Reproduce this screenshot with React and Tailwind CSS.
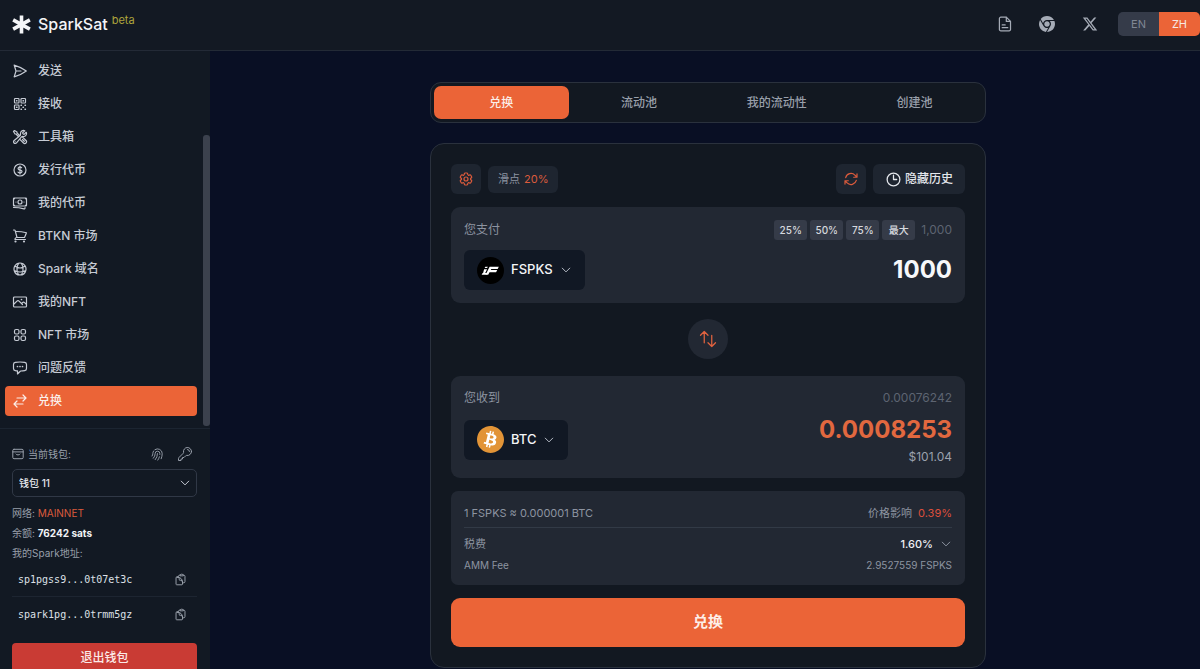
import { useState } from 'react';
import { FaChrome, FaXTwitter } from 'react-icons/fa6';
import { SiBitcoin } from 'react-icons/si';
import {
  HiOutlineArrowPath,
  HiOutlineArrowsRightLeft,
  HiOutlineArrowsUpDown,
  HiOutlineBanknotes,
  HiOutlineChatBubbleLeftEllipsis,
  HiOutlineChevronDown,
  HiOutlineClipboardDocument,
  HiOutlineClock,
  HiOutlineCog6Tooth,
  HiOutlineCurrencyDollar,
  HiOutlineFingerPrint,
  HiOutlineGlobeAlt,
  HiOutlineKey,
  HiOutlinePaperAirplane,
  HiOutlinePhoto,
  HiOutlineQrCode,
  HiOutlineShoppingCart,
  HiOutlineSquares2X2,
  HiOutlineWrenchScrewdriver,
} from 'react-icons/hi2';

const NAV = [
  { id: 'send', label: '发送', icon: HiOutlinePaperAirplane },
  { id: 'receive', label: '接收', icon: HiOutlineQrCode },
  { id: 'tools', label: '工具箱', icon: HiOutlineWrenchScrewdriver },
  { id: 'issue', label: '发行代币', icon: HiOutlineCurrencyDollar },
  { id: 'tokens', label: '我的代币', icon: HiOutlineBanknotes },
  { id: 'btkn', label: 'BTKN 市场', icon: HiOutlineShoppingCart },
  { id: 'names', label: 'Spark 域名', icon: HiOutlineGlobeAlt },
  { id: 'nfts', label: '我的NFT', icon: HiOutlinePhoto },
  { id: 'nftmarket', label: 'NFT 市场', icon: HiOutlineSquares2X2 },
  { id: 'feedback', label: '问题反馈', icon: HiOutlineChatBubbleLeftEllipsis },
  { id: 'swap', label: '兑换', icon: HiOutlineArrowsRightLeft },
];

const TABS = ['兑换', '流动池', '我的流动性', '创建池'];
const PERCENTS = ['25%', '50%', '75%', '最大'];
const ADDRESSES = ['sp1pgss9...0t07et3c', 'spark1pg...0trmm5gz'];

function Logo() {
  return (
    <svg viewBox="0 0 20 20" className="w-[19px] h-[19px]" stroke="#f4f5f7" strokeWidth="3.8" aria-hidden="true">
      <path d="M10 0.5v19M1.2 5.2l17.6 9.6M18.8 5.2L1.2 14.8" />
    </svg>
  );
}

function DocIcon() {
  return (
    <svg viewBox="0 0 16 18" className="w-[14px] h-4" fill="none" stroke="currentColor" strokeWidth="1.4" strokeLinejoin="round" strokeLinecap="round" aria-hidden="true">
      <path d="M3.200 1.200h6.300l4.800 4.800v9.200a1.600 1.600 0 0 1-1.600 1.600H3.200a1.600 1.600 0 0 1-1.600-1.600V2.800a1.600 1.600 0 0 1 1.600-1.600z" />
      <path d="M9.500 1.400V6h4.600M4.800 10h3.400M4.800 13.200h6.400" />
    </svg>
  );
}

function WalletIcon() {
  return (
    <svg viewBox="0 0 12 12" className="w-3 h-3" fill="none" stroke="currentColor" strokeLinecap="round" strokeLinejoin="round" aria-hidden="true">
      <rect x="0.8" y="1.3" width="10.4" height="9.4" rx="1.2" />
      <path d="M0.8 3.900h10.400M3.900 6.100c.6 1.200 3.600 1.200 4.200 0" />
    </svg>
  );
}

function FspksLogo() {
  return (
    <svg viewBox="0 0 27 27" className="w-[27px] h-[27px]" aria-hidden="true">
      <circle cx="13.5" cy="13.5" r="13.5" fill="#000" />
      <g fill="#fff">
        <path d="M8.300 9.800h2.500l-.7 1.300H7.600z" />
        <path d="M7.100 12.200h3l-1.900 3.700h2.200l-1 1.900H4.600l1-1.800h.5z" />
        <path d="M12.600 9.800h9.200l-1.100 2.200h-6.400l-.5 1.100h6.400l-1.100 2.100h-6.600l-1.300 2.600H8.600z" />
      </g>
    </svg>
  );
}

function BtcLogo() {
  return (
    <span className="flex rounded-full bg-[radial-gradient(closest-side,#fff_85%,transparent_86%)] text-[#e29437]">
      <SiBitcoin className="h-[27px] w-[27px]" />
    </span>
  );
}

function Header() {
  return (
    <header className="flex h-[51px] shrink-0 items-center justify-between border-b border-[#232a36] bg-[#131923] pb-[2px] pl-3">
      <a href="#" className="flex items-center">
        <Logo />
        <span className="ml-[7px] text-base font-medium text-[#f4f5f7]">SparkSat</span>
        <span className="mb-2 ml-1 text-[11px] text-[#aea43c]">beta</span>
      </a>
      <div className="flex items-center text-[#a5abb6]">
        <a href="#docs" aria-label="Docs" className="mr-[27px]"><DocIcon /></a>
        <a href="#chrome" aria-label="Chrome" className="mr-[27px]"><FaChrome className="h-4 w-4" /></a>
        <a href="#x" aria-label="X" className="mr-5"><FaXTwitter className="h-4 w-4" /></a>
        <div className="flex h-6 overflow-hidden rounded-[5px] text-[11px]">
          <button className="w-[41px] bg-[#353b49] text-[#808794]">EN</button>
          <button className="w-[41px] bg-[#eb6437] text-[#f6e9e4]">ZH</button>
        </div>
      </div>
    </header>
  );
}

function Sidebar() {
  const [active, setActive] = useState('swap');
  return (
    <aside className="flex w-[210px] shrink-0 flex-col bg-[#121923]">
      <div className="flex justify-between border-b border-[#1c2531]">
        <nav className="flex w-[197px] flex-col gap-[3px] pt-[5px] pb-3 pl-[5px]">
          {NAV.map(({ id, label, icon: Icon }) => (
            <button
              key={id}
              onClick={() => setActive(id)}
              className={`flex h-[30px] items-center gap-[10px] rounded-[4px] pl-[7px] text-[12px] font-medium ${active === id ? 'bg-[#eb6437] text-[#fbeee9]' : 'text-[#c6cbd4]'}`}
            >
              <Icon className="h-4 w-4 stroke-[1.8]" />
              {label}
            </button>
          ))}
        </nav>
        {/* scroll thumb */}
        <div className="mt-[84px] mb-[2px] w-[7px] rounded-[3px] bg-[#3b414d]" />
      </div>

      <div className="flex flex-col pt-4 pr-[13px] pl-3 text-[10px] text-[#989faa]">
        <div className="flex h-[18px] items-center justify-between pr-1">
          <label htmlFor="wallet" className="flex items-center gap-1"><WalletIcon />当前钱包:</label>
          <div className="flex gap-3">
            <button aria-label="Fingerprint"><HiOutlineFingerPrint className="h-[15px] w-[15px]" /></button>
            <button aria-label="Keys"><HiOutlineKey className="h-4 w-4" /></button>
          </div>
        </div>
        <div className="relative mt-[6px]">
          <select id="wallet" className="h-7 w-full appearance-none rounded-[5px] border border-[#303846] bg-transparent px-[6px] text-[10px] font-medium text-[#e4e7ec]">
            <option>钱包 11</option>
          </select>
          <HiOutlineChevronDown className="pointer-events-none absolute top-2 right-[6px] h-3 w-3 stroke-2 text-[#c6cbd4]" />
        </div>
        <div className="mt-[6px] leading-5">
          <p>网络: <span className="text-[#dc5b3c]">MAINNET</span></p>
          <p>余额: <b className="text-[#f0f2f5]">76242 sats</b></p>
          <p>我的Spark地址:</p>
        </div>
        <ul className="divide-y divide-[#1d2531]">
          {ADDRESSES.map(a => (
            <li key={a} className="flex h-[34px] items-center justify-between pr-[10px] pl-[6px]">
              <span className="font-['DejaVu_Sans_Mono',monospace] text-[#dde0e6]">{a}</span>
              <button aria-label="Copy"><HiOutlineClipboardDocument className="h-[13px] w-[13px] stroke-[1.8]" /></button>
            </li>
          ))}
        </ul>
        <button className="mt-3 h-[30px] rounded-[4px] bg-[#c93b34] text-[12px] font-medium text-[#fbe9e7]">退出钱包</button>
      </div>
    </aside>
  );
}

function TokenButton({ icon, symbol }) {
  return (
    <button className="flex h-10 items-center gap-[7px] rounded-[6px] bg-[#111824] px-[13px] text-[13px] font-medium text-[#f4f5f7]">
      {icon}
      {symbol}
      <HiOutlineChevronDown className="h-3 w-3 stroke-2 text-[#b5bac4]" />
    </button>
  );
}

function SwapCard() {
  const [amount, setAmount] = useState('1000');
  return (
    <section className="mt-5 rounded-[14px] border border-[#2a313d] bg-[#121821] p-5 text-[12px] text-[#8d94a1]">
      <div className="flex items-center gap-[7px]">
        <button aria-label="Settings" className="flex h-[30px] w-[30px] items-center justify-center rounded-[6px] bg-[#1e2530] text-[#dc5b3c]">
          <HiOutlineCog6Tooth className="h-4 w-4 stroke-[1.8]" />
        </button>
        <span className="flex h-[27px] items-center gap-1 rounded-[6px] bg-[#1e2530] px-[10px] text-[11px]">滑点 <span className="text-[#dc5b3c]">20%</span></span>
        <button aria-label="Refresh" className="ml-auto flex h-[30px] w-[30px] items-center justify-center rounded-[6px] bg-[#1e2530] text-[#dc5b3c]">
          <HiOutlineArrowPath className="h-4 w-4 stroke-[1.8]" />
        </button>
        <button className="flex h-[30px] items-center gap-[3px] rounded-[6px] bg-[#1e2530] px-3 font-medium text-[#e4e7ec]">
          <HiOutlineClock className="h-[17px] w-[17px] stroke-[1.8]" />
          隐藏历史
        </button>
      </div>

      <div className="mt-[13px] rounded-[9px] bg-[#222833] p-[13px]">
        <div className="flex h-5 items-center justify-between">
          <label htmlFor="pay">您支付</label>
          <div className="flex items-center gap-[3px]">
            {PERCENTS.map(p => (
              <button key={p} className="h-5 w-[33px] rounded-[3px] bg-[#353b48] text-[10px] font-medium text-[#d5d8de]">{p}</button>
            ))}
            <span className="ml-[3px] text-[#5d6471]">1,000</span>
          </div>
        </div>
        <div className="mt-[10px] flex items-center justify-between">
          <TokenButton icon={<FspksLogo />} symbol="FSPKS" />
          <input
            id="pay"
            value={amount}
            onChange={e => setAmount(e.target.value)}
            className="w-40 bg-transparent text-right text-[24px] leading-8 font-bold text-[#f7f8fa] outline-none"
          />
        </div>
      </div>

      <button aria-label="Switch" className="mx-auto mt-4 mb-[17px] flex h-10 w-10 items-center justify-center rounded-full bg-[#222833] text-[#e0623f]">
        <HiOutlineArrowsUpDown className="h-5 w-5" />
      </button>

      <div className="rounded-[9px] bg-[#222833] p-[13px]">
        <div className="flex h-[17px] items-center justify-between">
          <span>您收到</span>
          <span className="text-[#5d6471]">0.00076242</span>
        </div>
        <div className="mt-2 flex items-center justify-between">
          <TokenButton icon={<BtcLogo />} symbol="BTC" />
          <div className="text-right">
            <p className="text-[24px] leading-8 font-bold text-[#e2683f]">0.0008253</p>
            <p className="mt-[2px] leading-[17px] text-[#9aa1ad]">$101.04</p>
          </div>
        </div>
      </div>

      <div className="mt-[13px] rounded-[7px] bg-[#222833] px-[13px] pt-[13px] pb-3 text-[11px]">
        <div className="flex justify-between border-b border-[#323a46] pb-[5px] leading-[18px]">
          <span>1 FSPKS ≈ 0.000001 BTC</span>
          <span>价格影响 <span className="ml-[3px] text-[#dc4f3c]">0.39%</span></span>
        </div>
        <div className="mt-[6px] flex items-center justify-between leading-5">
          <span>税费</span>
          <button className="flex items-center gap-[7px] font-medium text-[#f0f2f5]">
            1.60%
            <HiOutlineChevronDown className="h-3 w-3 stroke-2 text-[#8d94a1]" />
          </button>
        </div>
        <div className="mt-[3px] flex justify-between text-[10px] leading-4">
          <span>AMM Fee</span>
          <span>2.9527559 FSPKS</span>
        </div>
      </div>

      <button className="mt-[13px] h-[49px] w-full rounded-[9px] bg-[#eb6437] text-[15px] font-bold text-[#fdeee8]">兑换</button>
    </section>
  );
}

export default function App() {
  const [tab, setTab] = useState('兑换');
  return (
    <div className="flex h-screen flex-col overflow-hidden bg-[#090f24] font-['Inter','Noto_Sans_CJK_SC',sans-serif]">
      <Header />
      <div className="flex min-h-0 flex-1">
        <Sidebar />
        <main className="flex-1 pt-[31px] pl-[6px]">
          <div className="mx-auto max-w-[556px]">
            <div role="tablist" className="flex gap-[3px] rounded-[11px] border border-[#2a313d] bg-[#121821] p-[3px]">
              {TABS.map(t => (
                <button
                  key={t}
                  role="tab"
                  aria-selected={tab === t}
                  onClick={() => setTab(t)}
                  className={`h-[33px] flex-1 rounded-[7px] text-[12px] font-medium ${tab === t ? 'bg-[#eb6437] text-[#fbeee9]' : 'text-[#989faa]'}`}
                >
                  {t}
                </button>
              ))}
            </div>
            <SwapCard />
          </div>
        </main>
      </div>
    </div>
  );
}
